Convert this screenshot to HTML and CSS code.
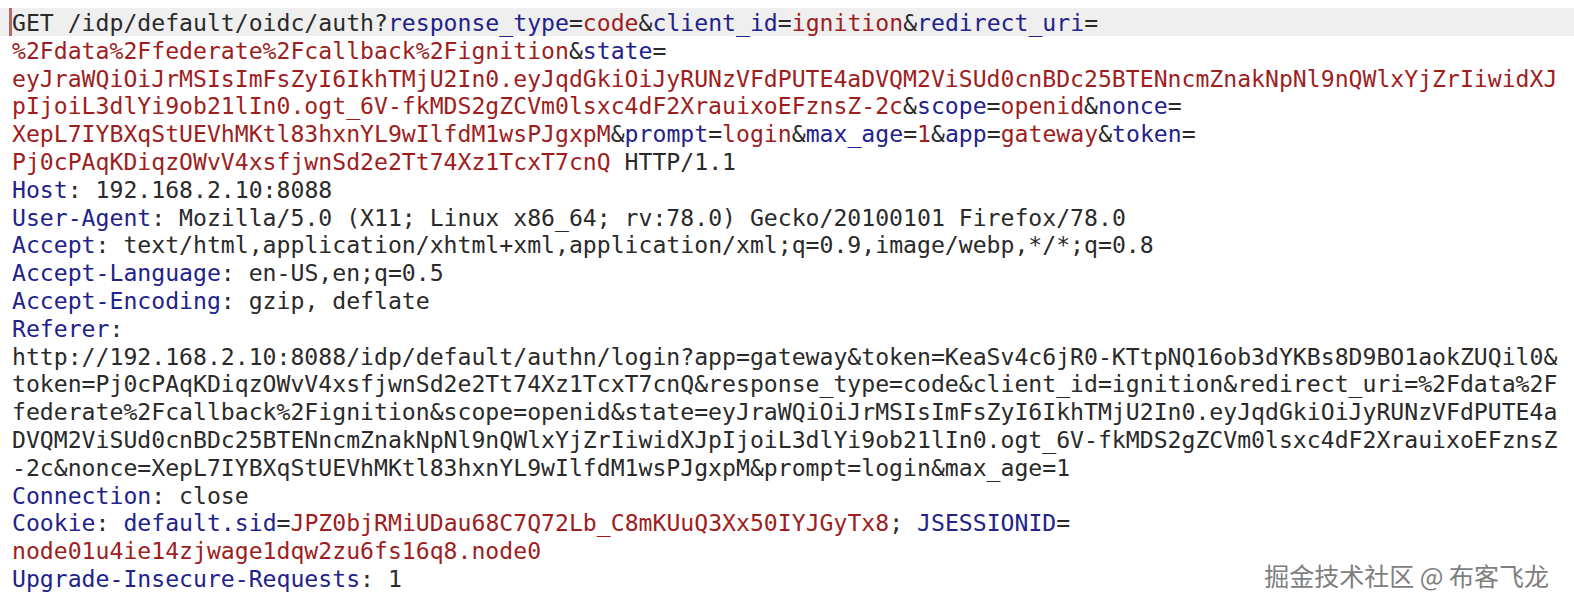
FILE: index.html
```html
<!DOCTYPE html>
<html>
<head>
<meta charset="utf-8">
<link rel="stylesheet" href="styles.css">
</head>
<body>
<div class="editor">
<div class="line current"><span class="caret"></span>GET /idp/default/oidc/auth?<span class="k">response_type</span>=<span class="v">code</span>&amp;<span class="k">client_id</span>=<span class="v">ignition</span>&amp;<span class="k">redirect_uri</span>=</div>
<div class="line"><span class="v">%2Fdata%2Ffederate%2Fcallback%2Fignition</span>&amp;<span class="k">state</span>=</div>
<div class="line"><span class="v">eyJraWQiOiJrMSIsImFsZyI6IkhTMjU2In0.eyJqdGkiOiJyRUNzVFdPUTE4aDVQM2ViSUd0cnBDc25BTENncmZnakNpNl9nQWlxYjZrIiwidXJ</span></div>
<div class="line"><span class="v">pIjoiL3dlYi9ob21lIn0.ogt_6V-fkMDS2gZCVm0lsxc4dF2XrauixoEFznsZ-2c</span>&amp;<span class="k">scope</span>=<span class="v">openid</span>&amp;<span class="k">nonce</span>=</div>
<div class="line"><span class="v">XepL7IYBXqStUEVhMKtl83hxnYL9wIlfdM1wsPJgxpM</span>&amp;<span class="k">prompt</span>=<span class="v">login</span>&amp;<span class="k">max_age</span>=<span class="v">1</span>&amp;<span class="k">app</span>=<span class="v">gateway</span>&amp;<span class="k">token</span>=</div>
<div class="line"><span class="v">Pj0cPAqKDiqzOWvV4xsfjwnSd2e2Tt74Xz1TcxT7cnQ</span> HTTP/1.1</div>
<div class="line"><span class="k">Host</span>: 192.168.2.10:8088</div>
<div class="line"><span class="k">User-Agent</span>: Mozilla/5.0 (X11; Linux x86_64; rv:78.0) Gecko/20100101 Firefox/78.0</div>
<div class="line"><span class="k">Accept</span>: text/html,application/xhtml+xml,application/xml;q=0.9,image/webp,*/*;q=0.8</div>
<div class="line"><span class="k">Accept-Language</span>: en-US,en;q=0.5</div>
<div class="line"><span class="k">Accept-Encoding</span>: gzip, deflate</div>
<div class="line"><span class="k">Referer</span>:</div>
<div class="line">http://192.168.2.10:8088/idp/default/authn/login?app=gateway&amp;token=KeaSv4c6jR0-KTtpNQ16ob3dYKBs8D9BO1aokZUQil0&amp;</div>
<div class="line">token=Pj0cPAqKDiqzOWvV4xsfjwnSd2e2Tt74Xz1TcxT7cnQ&amp;response_type=code&amp;client_id=ignition&amp;redirect_uri=%2Fdata%2F</div>
<div class="line">federate%2Fcallback%2Fignition&amp;scope=openid&amp;state=eyJraWQiOiJrMSIsImFsZyI6IkhTMjU2In0.eyJqdGkiOiJyRUNzVFdPUTE4a</div>
<div class="line">DVQM2ViSUd0cnBDc25BTENncmZnakNpNl9nQWlxYjZrIiwidXJpIjoiL3dlYi9ob21lIn0.ogt_6V-fkMDS2gZCVm0lsxc4dF2XrauixoEFznsZ</div>
<div class="line">-2c&amp;nonce=XepL7IYBXqStUEVhMKtl83hxnYL9wIlfdM1wsPJgxpM&amp;prompt=login&amp;max_age=1</div>
<div class="line"><span class="k">Connection</span>: close</div>
<div class="line"><span class="k">Cookie</span>: <span class="k">default.sid</span>=<span class="v">JPZ0bjRMiUDau68C7Q72Lb_C8mKUuQ3Xx50IYJGyTx8</span>; <span class="k">JSESSIONID</span>=</div>
<div class="line"><span class="v">node01u4ie14zjwage1dqw2zu6fs16q8.node0</span></div>
<div class="line"><span class="k">Upgrade-Insecure-Requests</span>: 1</div>
</div>
<div class="watermark">掘金技术社区 @ 布客飞龙</div>
</body>
</html>
```

FILE: styles.css
```css
html, body {
  margin: 0;
  padding: 0;
  background: #ffffff;
}

body {
  position: relative;
  width: 1574px;
  height: 598px;
  overflow: hidden;
}

.editor {
  padding-top: 8px;
  font-family: "DejaVu Sans Mono", "Liberation Mono", monospace;
  font-size: 23.14px;
  color: #2a2a2a;
}

.line {
  height: 27.8px;
  line-height: 31.4px;
  padding-left: 12px;
  white-space: pre;
}

.line.current {
  position: relative;
  background: #efefef;
}

.caret {
  position: absolute;
  left: 9px;
  top: 0;
  bottom: 0;
  width: 3px;
  background: #b06a68;
}

.k {
  color: #22228c;
}

.v {
  color: #9e1e1e;
}

.watermark {
  position: absolute;
  right: 25px;
  bottom: 7px;
  font-family: "Noto Sans CJK SC", sans-serif;
  font-size: 25px;
  line-height: 32px;
  color: #7e7e7e;
  text-shadow: 0 0 1px #ffffff, 0 0 2px #ffffff, 0 0 3px #ffffff;
}
```
